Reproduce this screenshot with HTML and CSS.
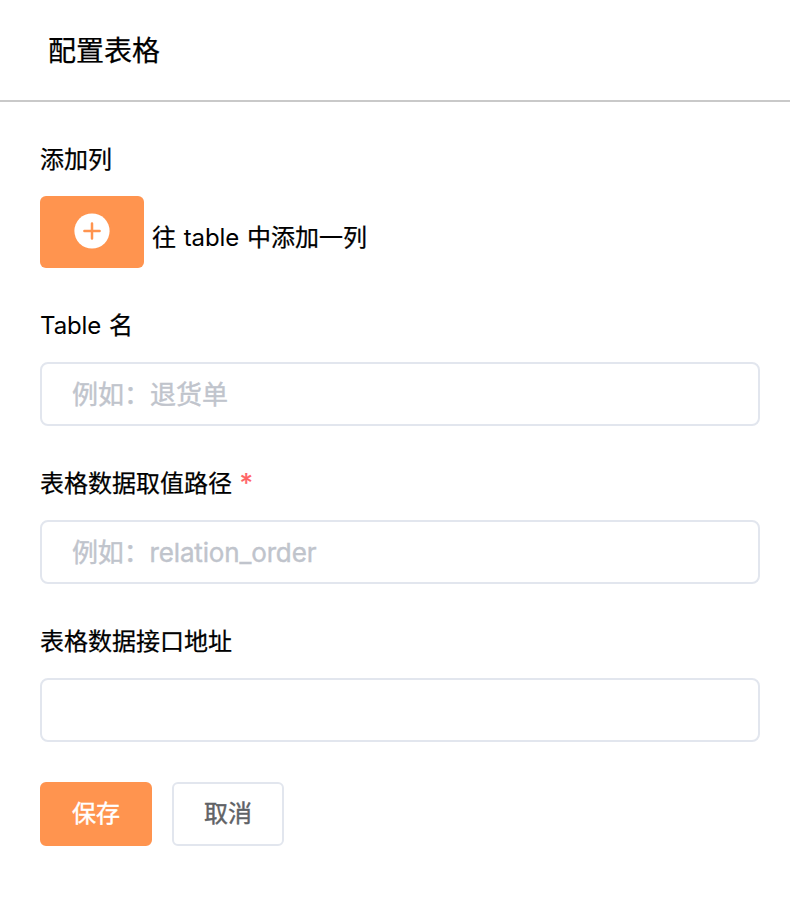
FILE: index.html
```html
<!DOCTYPE html>
<html lang="zh-CN">
<head>
<meta charset="utf-8">
<title>配置表格</title>
<link rel="stylesheet" href="styles.css">
</head>
<body>
<header class="header"><h1 class="title">配置表格</h1></header>
<form class="form">
  <section class="field">
    <div class="label">添加列</div>
    <div class="add-row">
      <button type="button" class="add" aria-label="添加列">
        <svg width="36" height="36" viewBox="0 0 36 36"><circle cx="18" cy="18" r="17.6" fill="#fff"/><path d="M18 10.4v15.2M10.4 18h15.2" stroke="#ff944f" stroke-width="2.5" stroke-linecap="round"/></svg>
      </button>
      <span class="hint">往 <span class="latin">table</span> 中添加一列</span>
    </div>
  </section>
  <section class="field">
    <label class="label" for="name"><span class="latin">Table</span> 名</label>
    <input class="input" id="name" placeholder="例如：退货单">
  </section>
  <section class="field">
    <label class="label" for="path">表格数据取值路径 <span class="required">*</span></label>
    <input class="input latin-input" id="path" placeholder="例如：relation_order">
  </section>
  <section class="field">
    <label class="label" for="url">表格数据接口地址</label>
    <input class="input" id="url">
  </section>
  <div class="actions">
    <button type="button" class="btn primary">保存</button>
    <button type="button" class="btn">取消</button>
  </div>
</form>
</body>
</html>
```
FILE: styles.css
```css
* { box-sizing: border-box; }
body {
  margin: 0;
  background: #fff;
  color: #000;
  font: 24px/36px Inter, "Noto Sans CJK SC", sans-serif;
  word-spacing: 1px;
  -webkit-text-stroke: 0.25px currentColor;
}
.header {
  height: 102px;
  padding: 31px 48px 29px;
  border-bottom: 2px solid #c9c9c9;
}
.title { margin: 0; font-size: 28px; line-height: 40px; font-weight: 400; }
.form { padding: 40px 30px 0 40px; }
.field { margin-bottom: 40px; }
.label { display: block; height: 36px; margin-bottom: 18px; white-space: nowrap; }
.latin { letter-spacing: -0.1px; -webkit-text-stroke-width: 0; }
.add-row { display: flex; gap: 8px; height: 72px; }
.add {
  display: flex;
  align-items: center;
  justify-content: center;
  width: 104px;
  height: 72px;
  padding: 0 0 2px;
  border: 0;
  border-radius: 6px;
  background: #ff944f;
}
.hint { padding-top: 24px; white-space: nowrap; }
.required { color: #ff6464; font-size: 26px; line-height: 1; }
.input {
  display: block;
  width: 100%;
  height: 64px;
  padding: 0 30px;
  border: 2px solid #e2e6ee;
  border-radius: 8px;
  font: inherit;
  font-size: 26px;
}
.input::placeholder { color: #c0c4cc; opacity: 1; -webkit-text-stroke: 0.4px #c0c4cc; }
.latin-input::placeholder { letter-spacing: -0.15px; }
.actions { display: flex; gap: 20px; }
.btn {
  width: 112px;
  height: 64px;
  padding: 0;
  border: 2px solid #e2e6ee;
  border-radius: 6px;
  background: #fff;
  color: #606266;
  font: inherit;
  -webkit-text-stroke: 0.4px currentColor;
}
.primary { border-color: #ff944f; background: #ff944f; color: #fff; }
```
